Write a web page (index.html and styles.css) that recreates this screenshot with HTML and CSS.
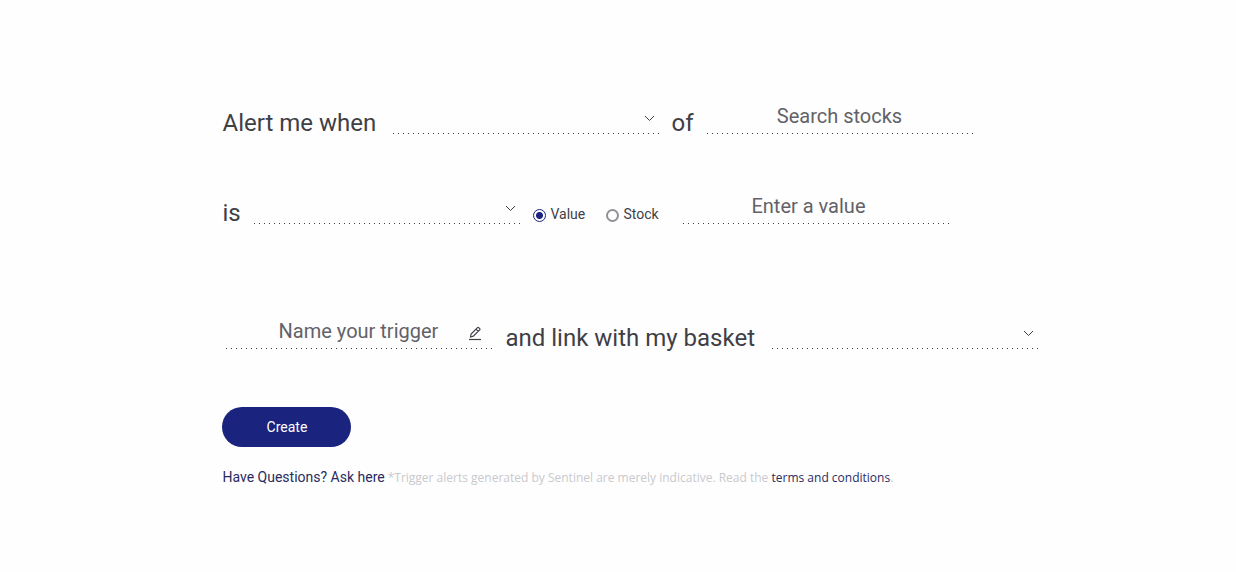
FILE: index.html
```html
<!DOCTYPE html>
<html lang="en">
<head>
<meta charset="utf-8">
<meta name="viewport" content="width=device-width, initial-scale=1">
<title>Create trigger</title>
<link rel="stylesheet" href="styles.css">
</head>
<body>
<main class="page">
  <form class="trigger-form">
    <div class="row">
      <label class="phrase phrase-alert" for="metric">Alert me when</label>
      <span class="field">
        <select class="control" id="metric"><option></option></select>
        <svg class="chevron" viewBox="0 0 11 7" aria-hidden="true"><path d="M1 1l4.500 4.500L10 1"/></svg>
      </span>
      <label class="phrase phrase-of" for="stock">of</label>
      <span class="field"><input class="control" id="stock" type="text" placeholder="Search stocks"></span>
    </div>
    <div class="row">
      <label class="phrase phrase-is" for="operator">is</label>
      <span class="field">
        <select class="control" id="operator"><option></option></select>
        <svg class="chevron" viewBox="0 0 11 7" aria-hidden="true"><path d="M1 1l4.500 4.500L10 1"/></svg>
      </span>
      <span class="choices">
        <label class="choice"><input class="radio" type="radio" name="kind" checked>Value</label>
        <label class="choice"><input class="radio" type="radio" name="kind">Stock</label>
      </span>
      <span class="field"><input class="control control-value" type="text" placeholder="Enter a value" aria-label="Value"></span>
    </div>
    <div class="row row-name">
      <span class="field">
        <input class="control" type="text" placeholder="Name your trigger" aria-label="Trigger name">
        <svg class="pencil" viewBox="0 0 14 15" aria-hidden="true"><path d="M2.500 11l.6-3L9.500 1.600q.6-.6 1.200 0l1 1q.6.6 0 1.200L5.300 10.200zM8 3.200l2.200 2.200"/><path d="M1 13.500h12"/></svg>
      </span>
      <label class="phrase phrase-basket" for="basket">and link with my basket</label>
      <span class="field">
        <select class="control" id="basket"><option></option></select>
        <svg class="chevron" viewBox="0 0 11 7" aria-hidden="true"><path d="M1 1l4.500 4.500L10 1"/></svg>
      </span>
    </div>
    <button class="create" type="button">Create</button>
    <p class="footnote"><a class="ask" href="#">Have Questions? Ask here</a> <span class="note">*Trigger alerts generated by Sentinel are merely indicative. Read the <a class="terms" href="#">terms and conditions</a>.</span></p>
  </form>
</main>
</body>
</html>
```
FILE: styles.css
```css
* { box-sizing: border-box; }

body {
  margin: 0;
  background: #fefefe;
  color: #3f3f46;
  font-family: Roboto, "Liberation Sans", sans-serif;
}

.page {
  padding: 98px 18% 80px;
}

.trigger-form { min-width: 820px; }

.row {
  display: flex;
  align-items: flex-end;
  height: 36px;
  margin-bottom: 54px;
}

.row-name {
  margin-top: 89px;
  margin-bottom: 58px;
  padding-left: 4px;
}

.phrase {
  flex: none;
  font-size: 24px;
  line-height: 22px;
}

.phrase-alert { width: 171px; }
.phrase-of { width: 48px; padding-left: 12px; }
.phrase-is { width: 32px; }
.phrase-basket { width: 280px; padding-left: 13px; }

.field {
  position: relative;
  flex: none;
  width: 266px;
  height: 36px;
  background: linear-gradient(to right, #3f3f46 1px, transparent 1px) left bottom / 5px 1px repeat-x;
}

.control {
  display: block;
  width: 100%;
  height: 35px;
  padding: 0 2px 0 0;
  border: 0;
  background: none;
  color: #3f3f46;
  font-family: Roboto, "Liberation Sans", sans-serif;
  font-size: 20px;
  text-align: center;
  appearance: none;
  outline: none;
}

.control::placeholder { color: #626268; opacity: 1; }

.control-value { padding-right: 16px; }

.chevron, .pencil {
  position: absolute;
  fill: none;
  stroke: #3f3f46;
  pointer-events: none;
}

.chevron { top: 17px; right: 4px; width: 11px; height: 7px; }
.pencil { top: 13px; right: 10px; width: 14px; height: 15px; stroke-width: 1.2; }

.choices {
  display: flex;
  flex: none;
  width: 163px;
  padding-left: 13px;
  font-size: 14px;
  line-height: 20px;
}

.choice {
  display: flex;
  align-items: center;
  gap: 4px;
  width: 73px;
}

.radio {
  appearance: none;
  flex: none;
  width: 13px;
  height: 13px;
  margin: 2px 0 0;
  border: 2px solid #909096;
  border-radius: 50%;
  background: #fff;
}

.radio:checked {
  border: 1px solid #1a237e;
  background: radial-gradient(circle, #1a237e 3px, #fff 4px);
}

.create {
  display: block;
  width: 129px;
  height: 40px;
  margin-bottom: 20px;
  border: 0;
  border-radius: 20px;
  background: #1a237e;
  color: #fff;
  font-family: inherit;
  font-size: 14px;
}

.footnote {
  margin: 0;
  font-size: 12px;
  line-height: 20px;
}

.ask { font-size: 14px; }
.ask, .terms { color: #292b5e; text-decoration: none; }
.note { color: #c9c9cd; font-family: "Open Sans", sans-serif; }
```
